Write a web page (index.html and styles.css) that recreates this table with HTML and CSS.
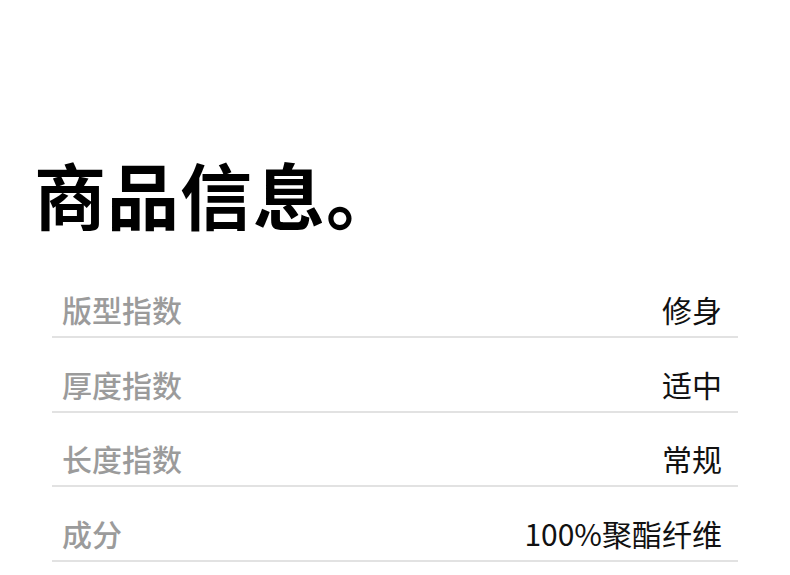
FILE: index.html
```html
<!DOCTYPE html>
<html lang="zh-CN">
<head>
<meta charset="utf-8">
<link rel="stylesheet" href="styles.css">
</head>
<body>
<main class="page">
  <h1 class="title">商品信息。</h1>
  <ul class="specs">
    <li class="row"><span class="label">版型指数</span><span class="value">修身</span></li>
    <li class="row"><span class="label">厚度指数</span><span class="value">适中</span></li>
    <li class="row"><span class="label">长度指数</span><span class="value">常规</span></li>
    <li class="row"><span class="label">成分</span><span class="value">100%聚酯纤维</span></li>
  </ul>
</main>
</body>
</html>
```
FILE: styles.css
```css
html, body {
  margin: 0;
  padding: 0;
  background: #fff;
}
body {
  font-family: "Noto Sans CJK SC", "Noto Sans", sans-serif;
  width: 790px;
  height: 575px;
  overflow: hidden;
}
.page {
  padding-top: 157px;
}
.title {
  margin: 0 0 0 34px;
  font-size: 72px;
  line-height: 72px;
  font-weight: 700;
  color: #000;
  letter-spacing: 1px;
}
.specs {
  list-style: none;
  margin: 34.5px 0 0 52px;
  padding: 0;
  width: 686px;
}
.row {
  display: flex;
  justify-content: space-between;
  align-items: flex-end;
  height: 72.5px;
  padding: 0 16px 0 10px;
  border-bottom: 2px solid #e2e2e2;
  box-sizing: content-box;
  font-size: 30px;
  line-height: 30px;
}
.row > span {
  padding-bottom: 12px;
}
.label {
  color: #9b9b9b;
  font-weight: 500;
}
.value {
  color: #111;
  font-weight: 400;
}
```
